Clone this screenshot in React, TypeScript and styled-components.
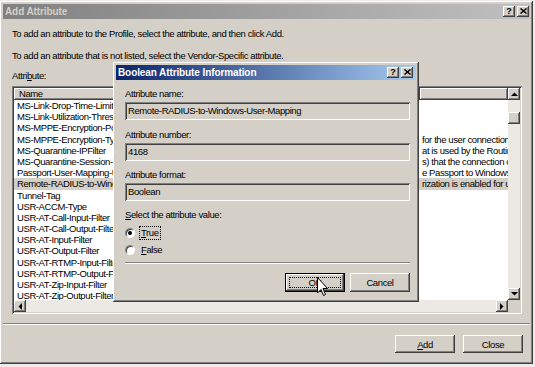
import React from "react";
import styled, { createGlobalStyle, css } from "styled-components";

const FACE = "#d4d0c8";

const raised = css`
  box-shadow: inset -1px -1px #404040, inset 1px 1px #ffffff,
    inset -2px -2px #808080, inset 2px 2px ${FACE};
`;

const sunken = css`
  box-shadow: inset 1px 1px #808080, inset -1px -1px #ffffff,
    inset 2px 2px #404040, inset -2px -2px ${FACE};
`;

const GlobalStyle = createGlobalStyle`
  html, body { margin: 0; padding: 0; }
  body {
    width: 535px;
    height: 367px;
    overflow: hidden;
    background: #ececec;
    font-family: "Liberation Sans", Arial, sans-serif;
    font-size: 9.5px;
    letter-spacing: -0.4px;
    color: #000;
  }
  * { box-sizing: border-box; }
`;

const Window = styled.div`
  position: relative;
  width: 533px;
  height: 363px;
  margin-top: 1px;
  padding: 3px;
  background: ${FACE};
  ${raised}
  display: flex;
  flex-direction: column;
`;

const TitleBar = styled.div<{ $active?: boolean }>`
  flex: none;
  height: 15px;
  display: flex;
  align-items: center;
  padding: 0 ${(p) => (p.$active ? 3 : 1)}px 0 2px;
  background: ${(p) =>
    p.$active
      ? "linear-gradient(to right, #0a246a, #a6caf0)"
      : "linear-gradient(to right, #808080, #c0c0c0)"};
`;

const TitleText = styled.span<{ $active?: boolean }>`
  flex: 1;
  font-weight: bold;
  font-size: 10px;
  letter-spacing: -0.1px;
  white-space: nowrap;
  color: ${(p) => (p.$active ? "#ffffff" : FACE)};
`;

const CaptionButtons = styled.div`
  display: flex;
  gap: 2px;
`;

const CaptionButton = styled.div`
  width: 12px;
  height: 11px;
  background: ${FACE};
  ${raised}
  display: flex;
  align-items: center;
  justify-content: center;
  font-weight: bold;
  font-size: 9px;
  letter-spacing: 0;
  line-height: 1;
  padding-bottom: 1px;
`;

const Body = styled.div`
  display: flex;
  flex-direction: column;
  padding: 0 8px 0 9px;
`;

const Line = styled.div<{ $mt: number }>`
  margin-top: ${(p) => p.$mt}px;
  height: 12px;
  line-height: 12px;
  white-space: nowrap;
`;

const Key = styled.span`
  text-decoration: underline;
  text-underline-offset: 1px;
`;

const ListBox = styled.div`
  margin-top: 4px;
  height: 228px;
  padding: 2px;
  background: #ffffff;
  ${sunken}
  display: grid;
  grid-template-columns: 1fr 12px;
  grid-template-rows: 1fr 12px;
`;

const ListContent = styled.div`
  overflow: hidden;
  display: flex;
  flex-direction: column;
`;

const HeaderRow = styled.div`
  flex: none;
  height: 12px;
  display: flex;
`;

const HeaderCell = styled.div<{ $w?: number }>`
  ${(p) => (p.$w ? `width: ${p.$w}px; flex: none;` : "flex: 1;")}
  height: 12px;
  line-height: 12px;
  padding-left: 5px;
  background: ${FACE};
  box-shadow: inset -1px -1px #404040, inset 1px 1px #ffffff,
    inset -2px -2px #808080;
`;

const Row = styled.div<{ $selected?: boolean }>`
  flex: none;
  height: 11.2px;
  line-height: 11.2px;
  display: flex;
  white-space: nowrap;
  background: ${(p) => (p.$selected ? FACE : "transparent")};
`;

const NameCell = styled.div`
  width: 406px;
  flex: none;
  padding-left: 3px;
  overflow: hidden;
`;

const DescCell = styled.div`
  flex: 1;
  padding-left: 2px;
  overflow: hidden;
`;

const VScroll = styled.div`
  display: flex;
  flex-direction: column;
  background: #ece9e4;
`;

const HScroll = styled.div`
  display: flex;
  background: #ece9e4;
`;

const ScrollBtn = styled.div`
  width: 12px;
  height: 12px;
  flex: none;
  background: ${FACE};
  ${raised}
  display: flex;
  align-items: center;
  justify-content: center;
`;

const Spacer = styled.div<{ $size?: number }>`
  ${(p) => (p.$size ? `flex: none; height: ${p.$size}px;` : "flex: 1;")}
`;

const Thumb = styled.div`
  flex: none;
  height: 12px;
  background: ${FACE};
  ${raised}
`;

const Corner = styled.div`
  background: ${FACE};
`;

const Separator = styled.div<{ $mt: number }>`
  flex: none;
  margin-top: ${(p) => p.$mt}px;
  height: 2px;
  border-top: 1px solid #808080;
  border-bottom: 1px solid #ffffff;
`;

const ButtonRow = styled.div<{ $mt: number; $pr: number; $gap: number }>`
  display: flex;
  justify-content: flex-end;
  gap: ${(p) => p.$gap}px;
  margin-top: ${(p) => p.$mt}px;
  padding-right: ${(p) => p.$pr}px;
`;

const Button = styled.div<{ $default?: boolean; $h: number }>`
  position: relative;
  width: 60px;
  height: ${(p) => p.$h}px;
  display: flex;
  align-items: center;
  justify-content: center;
  background: ${FACE};
  ${(p) =>
    p.$default
      ? css`
          box-shadow: inset 0 0 0 1px #000000, inset -2px -2px #404040,
            inset 2px 2px #ffffff, inset -3px -3px #808080,
            inset 3px 3px ${FACE};
          &::after {
            content: "";
            position: absolute;
            inset: 4px;
            border: 1px dotted #000;
          }
        `
      : raised}
`;

const Dialog = styled.div`
  position: absolute;
  left: 113px;
  top: 61px;
  width: 306px;
  height: 240px;
  padding: 3px;
  background: ${FACE};
  ${raised}
  display: flex;
  flex-direction: column;
`;

const DialogBody = styled.div`
  display: flex;
  flex-direction: column;
  padding: 0 6px 0 9px;
`;

const TextBox = styled.div`
  margin-top: 2px;
  height: 18px;
  line-height: 18px;
  padding-left: 3px;
  background: ${FACE};
  white-space: nowrap;
  ${sunken}
`;

const RadioRow = styled.div<{ $mt: number }>`
  margin-top: ${(p) => p.$mt}px;
  height: 14px;
  display: flex;
  align-items: center;
  gap: 4px;
`;

const RadioCircle = styled.span`
  width: 10px;
  height: 10px;
  flex: none;
  border-radius: 50%;
  background: #ffffff;
  border: 1px solid;
  border-color: #808080 #ffffff #ffffff #808080;
  box-shadow: inset 1px 1px #404040;
  display: flex;
  align-items: center;
  justify-content: center;
`;

const RadioDot = styled.span`
  width: 4px;
  height: 4px;
  border-radius: 50%;
  background: #000;
`;

const RadioLabel = styled.span<{ $focused?: boolean }>`
  padding: 0 1px;
  line-height: 12px;
  border: 1px ${(p) => (p.$focused ? "dotted #000" : "solid transparent")};
`;

const Cursor = styled.svg`
  position: absolute;
  left: 317px;
  top: 276px;
`;

const Tri = ({ dir }: { dir: "up" | "down" | "left" | "right" }) => {
  const pts = {
    up: "0,4 7,4 3.5,0.5",
    down: "0,0 7,0 3.5,3.5",
    left: "4,0 4,7 0.5,3.5",
    right: "0,0 0,7 3.5,3.5",
  }[dir];
  const vertical = dir === "up" || dir === "down";
  return (
    <svg
      width={vertical ? 7 : 4}
      height={vertical ? 4 : 7}
      viewBox={vertical ? "0 0 7 4" : "0 0 4 7"}
    >
      <polygon points={pts} fill="#000" />
    </svg>
  );
};

const CloseGlyph = () => (
  <svg width="7" height="6" viewBox="0 0 7 6">
    <path d="M0.5 0.5 L6.5 5.5 M6.5 0.5 L0.5 5.5" stroke="#000" strokeWidth="1.5" />
  </svg>
);

const names = [
  "MS-Link-Drop-Time-Limit",
  "MS-Link-Utilization-Threshold",
  "MS-MPPE-Encryption-Policy",
  "MS-MPPE-Encryption-Types",
  "MS-Quarantine-IPFilter",
  "MS-Quarantine-Session-Timeout",
  "Passport-User-Mapping-UPN-Suffix",
  "Remote-RADIUS-to-Windows-User-Mapping",
  "Tunnel-Tag",
  "USR-ACCM-Type",
  "USR-AT-Call-Input-Filter",
  "USR-AT-Call-Output-Filter",
  "USR-AT-Input-Filter",
  "USR-AT-Output-Filter",
  "USR-AT-RTMP-Input-Filter",
  "USR-AT-RTMP-Output-Filter",
  "USR-AT-Zip-Input-Filter",
  "USR-AT-Zip-Output-Filter",
];

const descs: Record<number, string> = {
  3: "for the user connection",
  4: "at is used by the Routing",
  5: "s) that the connection can",
  6: "e Passport to Windows",
  7: "rization is enabled for users",
};

export default function App() {
  return (
    <>
      <GlobalStyle />
      <Window>
        <TitleBar>
          <TitleText>Add Attribute</TitleText>
          <CaptionButtons>
            <CaptionButton>?</CaptionButton>
            <CaptionButton>
              <CloseGlyph />
            </CaptionButton>
          </CaptionButtons>
        </TitleBar>
        <Body>
          <Line $mt={9}>
            To add an attribute to the Profile, select the attribute, and then click Add.
          </Line>
          <Line $mt={10}>
            To add an attribute that is not listed, select the Vendor-Specific attribute.
          </Line>
          <Line $mt={8}>
            Attri<Key>b</Key>ute:
          </Line>
          <ListBox>
            <ListContent>
              <HeaderRow>
                <HeaderCell $w={406}>Name</HeaderCell>
                <HeaderCell />
              </HeaderRow>
              {names.map((n, i) => (
                <Row key={n} $selected={i === 7}>
                  <NameCell>{n}</NameCell>
                  <DescCell>{descs[i] ?? ""}</DescCell>
                </Row>
              ))}
            </ListContent>
            <VScroll>
              <ScrollBtn>
                <Tri dir="up" />
              </ScrollBtn>
              <Spacer $size={12} />
              <Thumb />
              <Spacer />
              <ScrollBtn>
                <Tri dir="down" />
              </ScrollBtn>
            </VScroll>
            <HScroll>
              <ScrollBtn>
                <Tri dir="left" />
              </ScrollBtn>
              <Spacer />
              <ScrollBtn>
                <Tri dir="right" />
              </ScrollBtn>
            </HScroll>
            <Corner />
          </ListBox>
        </Body>
        <Separator $mt={9} />
        <ButtonRow $mt={10} $pr={7} $gap={8}>
          <Button $h={18}>
            <Key>A</Key>dd
          </Button>
          <Button $h={18}>Close</Button>
        </ButtonRow>

        <Dialog>
          <TitleBar $active>
            <TitleText $active>Boolean Attribute Information</TitleText>
            <CaptionButtons>
              <CaptionButton>?</CaptionButton>
              <CaptionButton>
                <CloseGlyph />
              </CaptionButton>
            </CaptionButtons>
          </TitleBar>
          <DialogBody>
            <Line $mt={8}>Attribute name:</Line>
            <TextBox>Remote-RADIUS-to-Windows-User-Mapping</TextBox>
            <Line $mt={8.5}>Attribute number:</Line>
            <TextBox>4168</TextBox>
            <Line $mt={8.5}>Attribute format:</Line>
            <TextBox>Boolean</TextBox>
            <Line $mt={8}>
              <Key>S</Key>elect the attribute value:
            </Line>
            <RadioRow $mt={5}>
              <RadioCircle>
                <RadioDot />
              </RadioCircle>
              <RadioLabel $focused>
                <Key>T</Key>rue
              </RadioLabel>
            </RadioRow>
            <RadioRow $mt={3}>
              <RadioCircle />
              <RadioLabel>
                <Key>F</Key>alse
              </RadioLabel>
            </RadioRow>
            <Separator $mt={5} />
            <ButtonRow $mt={9} $pr={0} $gap={5}>
              <Button $default $h={19}>OK</Button>
              <Button $h={19}>Cancel</Button>
            </ButtonRow>
          </DialogBody>
        </Dialog>

        <Cursor width="12" height="20" viewBox="0 0 12 20">
          <path
            d="M0.5 0.5 L0.5 16 L4 12.5 L6.5 18.5 L8.5 17.5 L6 11.5 L10.5 11.5 Z"
            fill="#fff"
            stroke="#000"
            strokeWidth="1"
          />
        </Cursor>
      </Window>
    </>
  );
}
